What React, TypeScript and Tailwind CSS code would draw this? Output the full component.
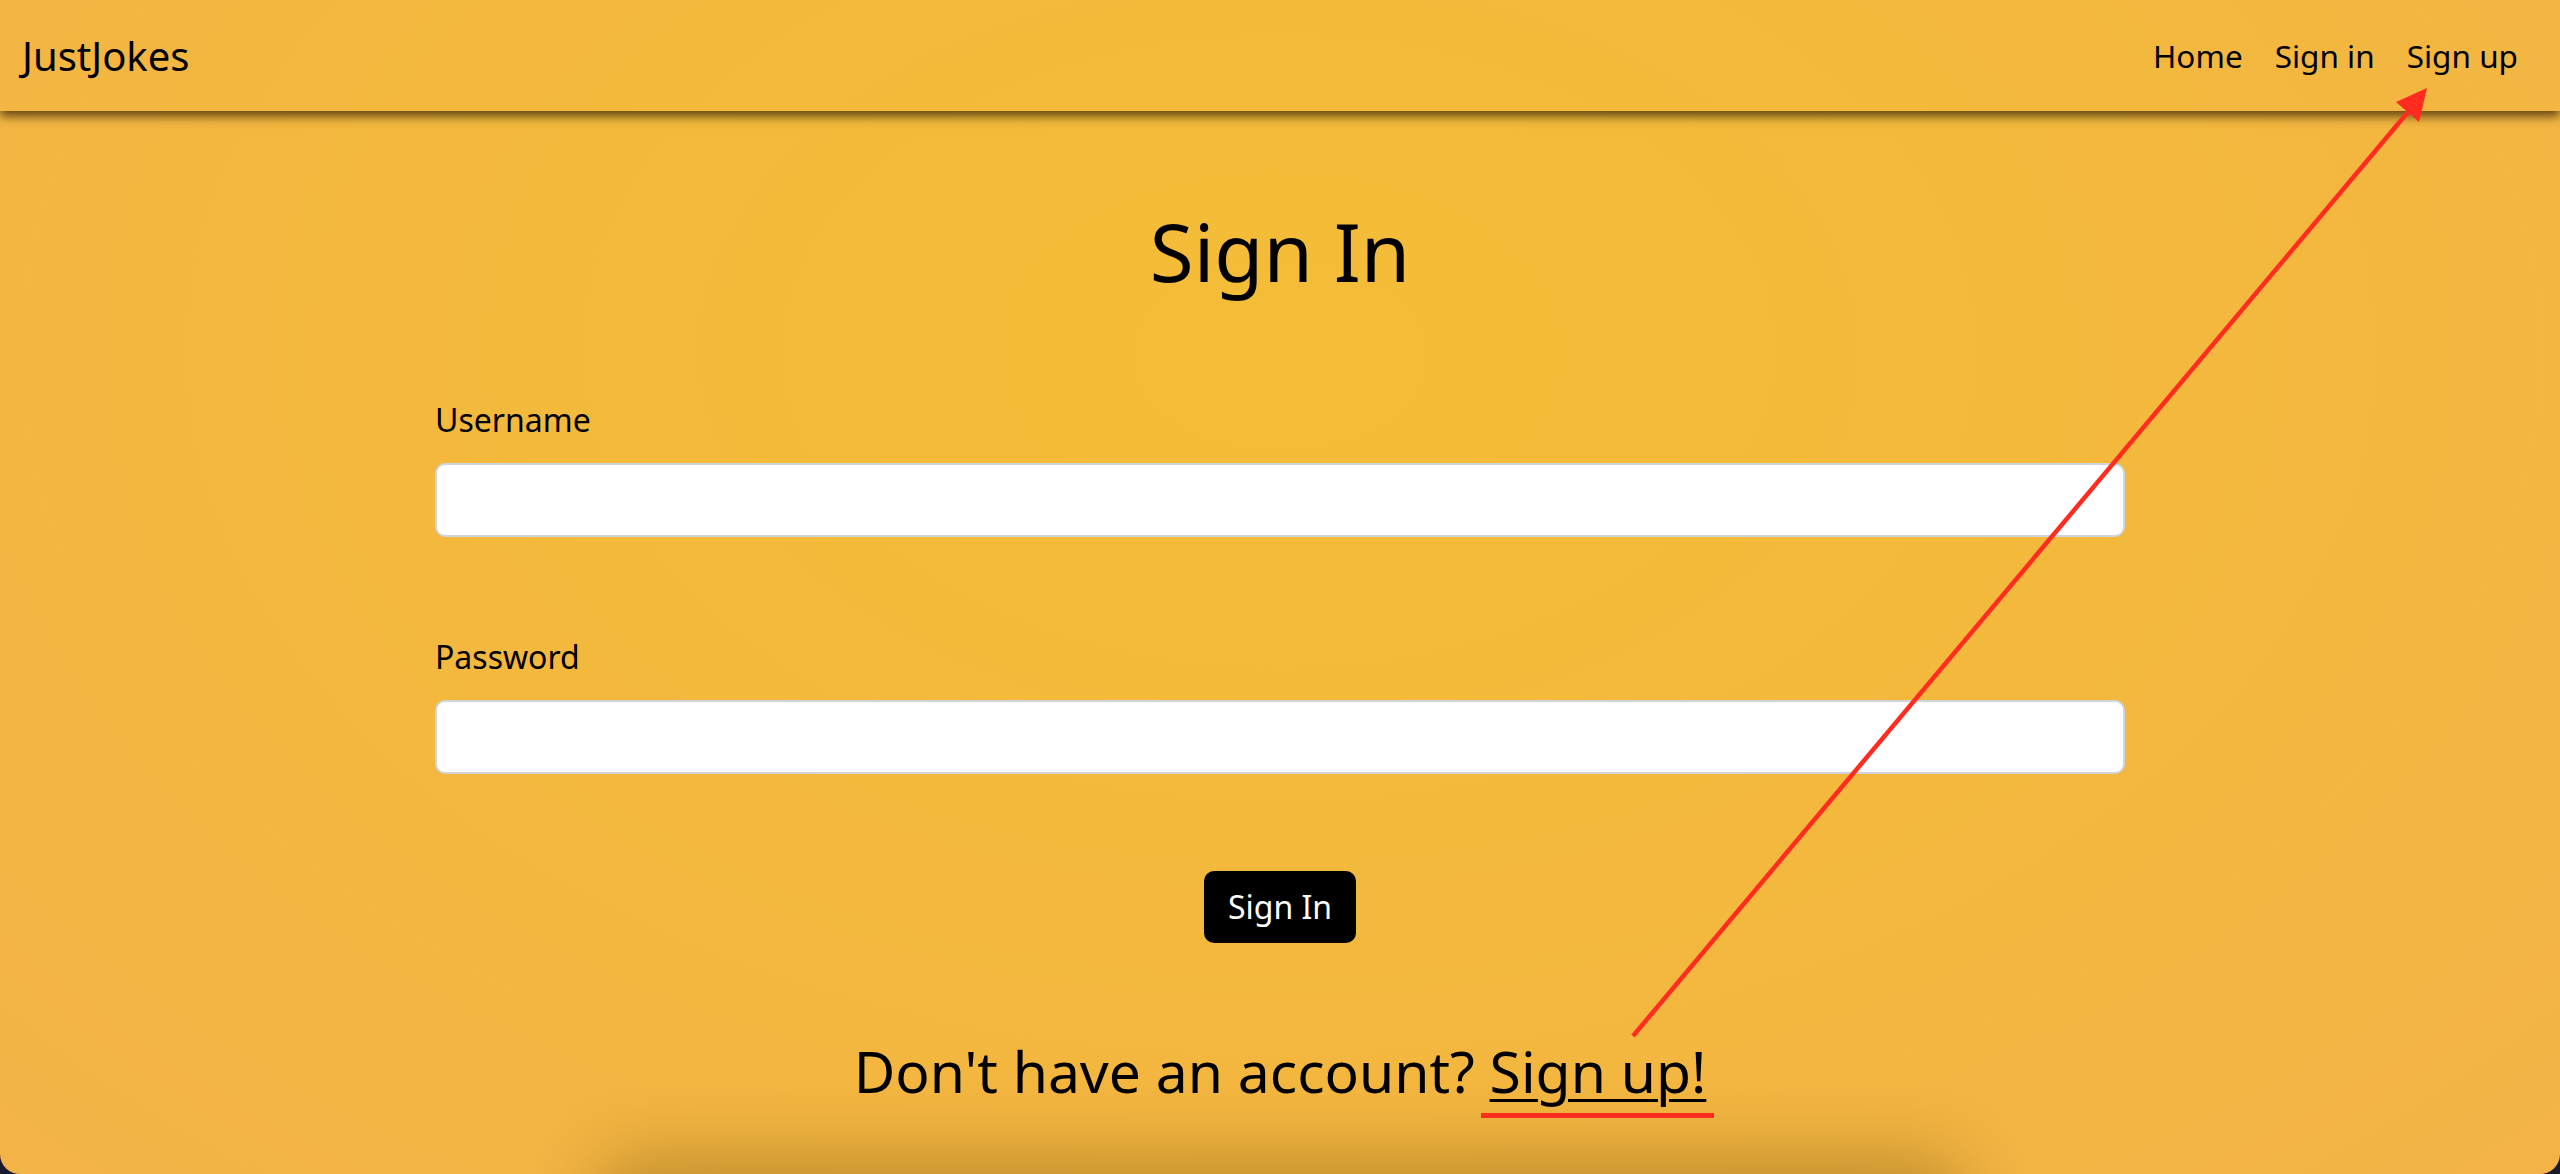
import React from "react";

const font = { fontFamily: '"Noto Sans", "Open Sans", Arial, sans-serif' };

function NavBar() {
  const links = ["Home", "Sign in", "Sign up"];
  return (
    <nav className="relative z-10 flex h-[111px] items-center justify-between pl-[22px] pr-[26px] shadow-[0_5px_10px_rgba(40,25,0,0.75)]">
      <a className="text-[40px] leading-none text-black">JustJokes</a>
      <ul className="flex items-center">
        {links.map((l) => (
          <li key={l}>
            <a className="block px-4 text-[31.5px] leading-none text-black">{l}</a>
          </li>
        ))}
      </ul>
    </nav>
  );
}

function Field({ label, type }: { label: string; type: string }) {
  return (
    <div className="flex flex-col">
      <label className="mb-[19px] text-[32px] leading-[1.5] text-black">{label}</label>
      <input
        type={type}
        className="h-[74px] w-full rounded-[10px] border-2 border-[#ced4da] bg-white px-6 text-[32px] outline-none"
      />
    </div>
  );
}

// red annotation drawn over the page
function Annotation() {
  return (
    <svg className="pointer-events-none absolute left-0 top-0 z-20" width={2560} height={1174}>
      <line x1={1633} y1={1036} x2={2408} y2={112} stroke="#ff2c1f" strokeWidth={4.5} />
      <polygon points="2427,88 2419,122 2396,102" fill="#ff2c1f" />
      <rect x={1481} y={1113} width={233} height={5} fill="#ff2c1f" />
    </svg>
  );
}

export default function App() {
  return (
    <div className="h-[1174px] w-[2560px] bg-[#1b1b2f]" style={font}>
      <div className="relative h-full w-full overflow-hidden rounded-b-[20px] bg-[radial-gradient(ellipse_at_50%_30%,#f4bd37_0%,#f3b93c_45%,#f3b348_100%)]">
        <NavBar />
        <main className="flex flex-col items-center">
          <h1 className="mt-[92px] text-[80px] leading-[1.2] text-black">Sign In</h1>
          <form className="mt-[97px] flex w-[1690px] flex-col gap-[96px]">
            <Field label="Username" type="text" />
            <Field label="Password" type="password" />
          </form>
          <button className="mt-[97px] h-[72px] w-[152px] rounded-[10px] bg-black text-[32px] leading-none text-white">
            Sign In
          </button>
          <h3 className="mt-[94px] text-[57px] leading-[1.2] text-black">
            Don't have an account?{" "}
            <a className="underline decoration-[3px] underline-offset-[6px]">Sign up!</a>
          </h3>
        </main>
        {/* card peeking below the fold */}
        <div className="absolute left-[620px] top-[1180px] h-[200px] w-[1320px] rounded-[20px] shadow-[0_0_70px_25px_rgba(90,60,0,0.32)]" />
        <Annotation />
      </div>
    </div>
  );
}
